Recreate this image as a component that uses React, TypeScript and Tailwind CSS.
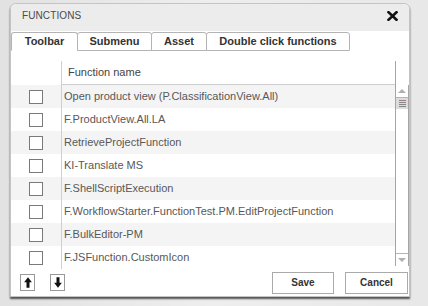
import React from 'react';

const FUNCTIONS = [
  'Open product view (P.ClassificationView.All)',
  'F.ProductView.All.LA',
  'RetrieveProjectFunction',
  'KI-Translate MS',
  'F.ShellScriptExecution',
  'F.WorkflowStarter.FunctionTest.PM.EditProjectFunction',
  'F.BulkEditor-PM',
  'F.JSFunction.CustomIcon',
];

const TABS = [
  { label: 'Toolbar', w: 'w-[67px]', active: true },
  { label: 'Submenu', w: 'w-[75px]', active: false },
  { label: 'Asset', w: 'w-[56px]', active: false },
  { label: 'Double click functions', w: 'w-[144px]', active: false },
];

function CloseIcon() {
  return (
    <svg width="11" height="10" viewBox="0 0 11 10">
      <path d="M1.5 1.2 L9.5 8.8 M9.5 1.2 L1.5 8.8" stroke="#111" strokeWidth="2.6" strokeLinecap="square" />
    </svg>
  );
}

function ArrowIcon({ down }: { down?: boolean }) {
  return (
    <svg width="8" height="11" viewBox="0 0 8 11" className={down ? 'rotate-180' : ''}>
      <path d="M4 0.3 L7.9 5.2 L5.5 5.2 L5.5 10.7 L2.5 10.7 L2.5 5.2 L0.1 5.2 Z" fill="#111" />
    </svg>
  );
}

function Scrollbar() {
  return (
    <div className="flex w-[14px] flex-col border-x border-[#a5a5a5] bg-white">
      <div className="flex h-[13px] items-center justify-center border-b border-[#b5b5b5] bg-white">
        <div className="h-0 w-0 border-x-[4px] border-b-[4px] border-x-transparent border-b-[#b0b0b0]" />
      </div>
      <div className="flex h-[11px] flex-col items-center justify-center gap-[1px] bg-[#dcdcdc]">
        <div className="h-px w-[7px] bg-[#a07c86]" />
        <div className="h-px w-[7px] bg-[#888]" />
        <div className="h-px w-[7px] bg-[#888]" />
        <div className="h-px w-[7px] bg-[#888]" />
      </div>
      <div className="flex-1" />
      <div className="flex h-[13px] items-center justify-center border-t border-[#b5b5b5] bg-white">
        <div className="h-0 w-0 border-x-[4px] border-t-[4px] border-x-transparent border-t-[#b0b0b0]" />
      </div>
    </div>
  );
}

export default function App() {
  return (
    <div
      className="h-[306px] w-[428px] overflow-hidden bg-gradient-to-r from-[#e2e2e2] via-[#eeeeee] to-[#e8e8e8] pl-[10px] pt-[3px]"
      style={{ fontFamily: '"Liberation Sans", Arial, sans-serif' }}
    >
      <div className="flex h-[294px] w-[400px] flex-col rounded-t-[6px] border border-[#c4c4c4] bg-white shadow-[0_2px_2px_rgba(0,0,0,0.65)]">
        {/* header */}
        <div className="flex h-[27px] shrink-0 items-center justify-between rounded-t-[6px] bg-[#ececec] pb-[4px] pl-[11px] pr-[11px]">
          <span className="text-[10px] tracking-[0.1px] text-[#4a4a4a]">FUNCTIONS</span>
          <CloseIcon />
        </div>

        {/* tabs */}
        <div className="flex h-[20px] shrink-0 items-end">
          {TABS.map((t, i) => (
            <div
              key={t.label}
              className={[
                'flex h-[19px] items-center justify-center rounded-t-[3px] border border-[#b4b4b4] bg-white text-[11px] font-bold text-[#333]',
                t.w,
                i > 0 ? '-ml-px' : '',
                t.active ? 'border-b-white' : '',
              ].join(' ')}
            >
              {t.label}
            </div>
          ))}
        </div>

        {/* table */}
        <div className="mt-[10px] flex shrink-0">
          <div className="w-[50px] shrink-0" />
          <div className="flex h-[24px] flex-1 items-center border-b border-l border-[#cfcfcf] pl-[6px] text-[11px] text-[#444]">
            Function name
          </div>
          <div className="w-[14px] shrink-0 border-l border-[#a5a5a5]" />
        </div>
        <div className="flex h-[184px] shrink-0">
          <div className="flex flex-1 flex-col">
            {FUNCTIONS.map((f, i) => (
              <div
                key={f}
                className={[
                  'flex h-[23px] items-center',
                  i % 2 === 0 ? 'bg-[#f4f4f4]' : 'bg-white',
                ].join(' ')}
              >
                <div className="flex w-[50px] shrink-0 items-center justify-center">
                  <div className="h-[14px] w-[14px] border border-[#7a7a7a] bg-white" />
                </div>
                <div className="flex h-full flex-1 items-center border-l border-[#cfcfcf] pl-[2px] text-[11px] text-[#585858]">
                  {f}
                </div>
              </div>
            ))}
          </div>
          <div className="flex h-[181px]">
            <Scrollbar />
          </div>
        </div>

        {/* footer */}
        <div className="flex flex-1 items-center justify-between pl-[9px] pr-[1px]">
          <div className="flex gap-[15px]">
            <button type="button" className="flex h-[17px] w-[15px] items-center justify-center border border-[#999] bg-white">
              <ArrowIcon />
            </button>
            <button type="button" className="flex h-[17px] w-[15px] items-center justify-center border border-[#999] bg-white">
              <ArrowIcon down />
            </button>
          </div>
          <div className="flex gap-[11px]">
            <button type="button" className="h-[22px] w-[62px] border border-[#aaa] bg-white text-[10px] font-bold text-[#333]">
              Save
            </button>
            <button type="button" className="h-[22px] w-[63px] border border-[#aaa] bg-white text-[10px] font-bold text-[#333]">
              Cancel
            </button>
          </div>
        </div>
      </div>
    </div>
  );
}
